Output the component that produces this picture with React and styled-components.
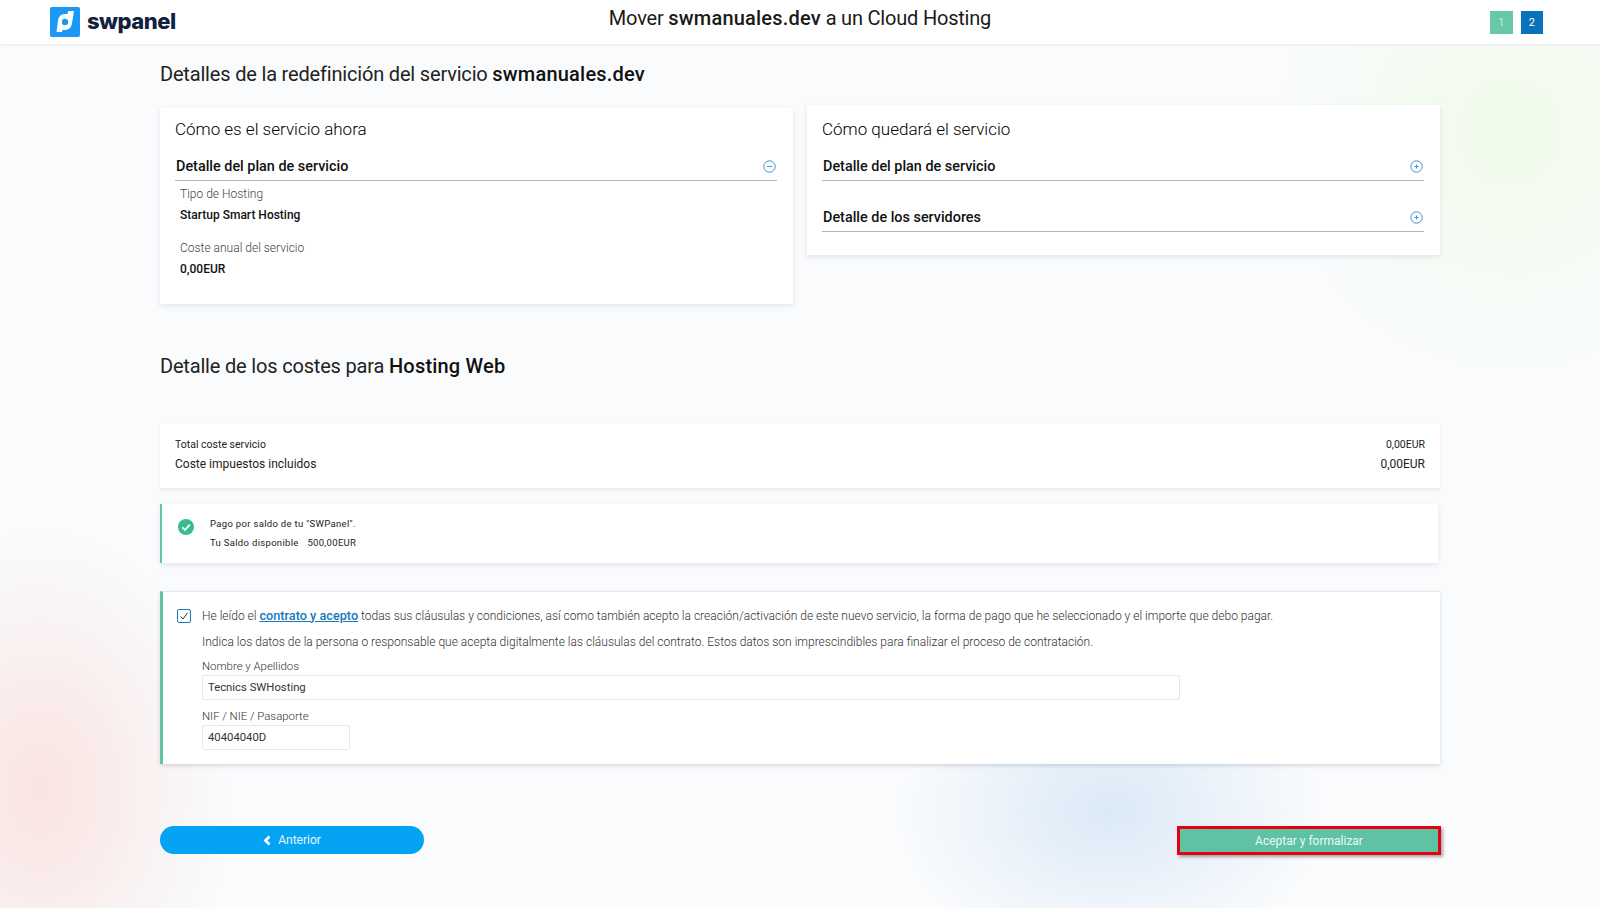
import React from "react";
import styled, { createGlobalStyle } from "styled-components";

const GlobalStyle = createGlobalStyle`
  html, body {
    margin: 0;
    padding: 0;
    height: 100%;
  }
  body {
    font-family: Roboto, "Liberation Sans", sans-serif;
    color: #1a1a1a;
    background-color: #f9fbfd;
  }
  * {
    box-sizing: border-box;
  }
`;

const Page = styled.div`
  width: 1600px;
  height: 908px;
  overflow: hidden;
  background:
    radial-gradient(ellipse 190px 260px at 40px 790px, rgba(250, 222, 218, 0.8), rgba(250, 222, 218, 0) 100%),
    radial-gradient(ellipse 210px 150px at 1110px 810px, rgba(214, 230, 246, 0.85), rgba(214, 230, 246, 0) 100%),
    radial-gradient(ellipse 230px 240px at 1510px 130px, rgba(240, 251, 233, 1), rgba(240, 251, 233, 0) 100%),
    #f9fbfd;
`;

const Header = styled.header`
  height: 45px;
  background: #fff;
  border-bottom: 1px solid #eef0f2;
  box-shadow: 0 1px 2px rgba(0, 0, 0, 0.03);
  display: grid;
  grid-template-columns: 1fr auto 1fr;
  align-items: center;
  padding: 0 50px;
`;

const Brand = styled.div`
  display: flex;
  align-items: center;
  gap: 7px;
`;

const BrandName = styled.span`
  font-family: Inter, sans-serif;
  font-weight: 800;
  font-size: 22px;
  letter-spacing: -0.5px;
  color: #14213d;
  position: relative;
  top: -1px;
`;

const HeaderTitle = styled.div`
  font-size: 20px;
  line-height: 24px;
  letter-spacing: -0.2px;
  position: relative;
  top: -4px;
  b {
    font-weight: 500;
    letter-spacing: 0.2px;
  }
`;

const Steps = styled.div`
  display: flex;
  justify-content: flex-end;
  gap: 8px;
  padding-right: 7px;
`;

const Step = styled.div`
  width: 22.5px;
  height: 23px;
  display: flex;
  align-items: center;
  justify-content: center;
  font-size: 11px;
  color: ${(p) => (p.$active ? "#fff" : "#c5ecdd")};
  background: ${(p) => (p.$active ? "#0a72bd" : "#66c8a7")};
`;

const Main = styled.main`
  width: 1280px;
  margin: 0 auto;
`;

const SectionTitle = styled.h2`
  margin: 0;
  font-size: 20px;
  line-height: 24px;
  font-weight: 400;
  letter-spacing: -0.18px;
  color: #222;
  padding-top: ${(p) => p.$top}px;
  b {
    font-weight: 500;
    letter-spacing: 0.2px;
    color: #111;
  }
`;

const Columns = styled.div`
  display: grid;
  grid-template-columns: 633px 633px;
  justify-content: space-between;
  align-items: start;
  margin-top: 19px;
`;

const Card = styled.section`
  background: #fff;
  box-shadow: 0 2px 5px rgba(40, 50, 70, 0.1);
  padding: ${(p) => 14 - (p.$offset || 0)}px 16px 0 15px;
  height: ${(p) => p.$height}px;
  margin-top: ${(p) => p.$offset || 0}px;
`;

const CardTitle = styled.h3`
  margin: 0 0 13px;
  font-size: 17px;
  line-height: 20px;
  font-weight: 300;
  color: #000;
`;

const DetailHead = styled.div`
  display: flex;
  align-items: center;
  justify-content: space-between;
  height: 29px;
  padding: 0 1px;
  border-bottom: 1px solid #b5b5b5;
  font-size: 14.4px;
  font-weight: 500;
  color: #111;
  margin-bottom: ${(p) => p.$gap || 0}px;
`;

const Field = styled.div`
  padding-left: 5px;
  margin-bottom: 19px;
`;

const FieldLabel = styled.div`
  font-size: 12px;
  line-height: 14px;
  font-weight: 300;
  color: #444;
  margin-top: 6px;
`;

const FieldValue = styled.div`
  font-size: 12px;
  line-height: 14px;
  font-weight: 500;
  color: #111;
  margin-top: 7px;
`;

const CostCard = styled.section`
  margin-top: 46px;
  height: 64px;
  background: #fff;
  box-shadow: 0 2px 3px rgba(40, 50, 70, 0.08);
  padding: 14px 15px 0;
`;

const CostRow = styled.div`
  display: flex;
  justify-content: space-between;
  font-size: ${(p) => (p.$large ? 12 : 10.5)}px;
  line-height: 14px;
  margin-bottom: 5px;
  color: #222;
`;

const PaymentCard = styled.section`
  margin-top: 16px;
  width: 1278px;
  height: 59px;
  background: #fff;
  border-left: 2px solid #5fc5a3;
  box-shadow: 0 2px 5px rgba(40, 50, 70, 0.1);
  display: flex;
  align-items: flex-start;
  padding: 15px 0 0 16px;
  gap: 16px;
`;

const PaymentText = styled.div`
  font-size: 9.5px;
  line-height: 19px;
  color: #222;
  letter-spacing: 0.32px;
  margin-top: -5px;
  span {
    margin-left: 6px;
  }
`;

const ContractCard = styled.section`
  margin-top: 28px;
  height: 173px;
  background: #fff;
  border-left: 3px solid #5fc5a3;
  border-top: 1px solid #e6e8ea;
  box-shadow: 0 2px 4px rgba(40, 50, 70, 0.16);
  padding: 15px 0 0 14px;
`;

const AcceptRow = styled.div`
  display: flex;
  align-items: center;
  gap: 11px;
  height: 17px;
`;

const Checkbox = styled.span`
  width: 14px;
  height: 14px;
  border: 1px solid #1a78b8;
  border-radius: 2px;
  display: flex;
  align-items: center;
  justify-content: center;
`;

const Legal = styled.p`
  margin: ${(p) => p.$top || 0}px 0 0;
  font-size: 12.02px;
  line-height: 16px;
  font-weight: 300;
  color: #333;
  a {
    color: #1577b8;
    font-size: 12.7px;
    font-weight: 500;
    text-decoration: underline;
  }
`;

const FormArea = styled.div`
  padding-left: 25px;
`;

const InputLabel = styled.label`
  display: block;
  font-size: 11.4px;
  line-height: 13px;
  font-weight: 300;
  color: #333;
  margin-top: ${(p) => p.$top}px;
  margin-bottom: 2px;
`;

const Input = styled.div`
  width: ${(p) => p.$width}px;
  height: 25px;
  border: 1px solid #e4e7ea;
  border-radius: 2px;
  background: #fff;
  font-size: 11.3px;
  line-height: 23px;
  color: #333;
  padding-left: 5px;
`;

const Actions = styled.div`
  display: flex;
  justify-content: space-between;
  margin-top: 62px;
`;

const BackButton = styled.button`
  width: 264px;
  height: 28px;
  border: 0;
  border-radius: 14px;
  background: #05a3f4;
  color: #e8f7ff;
  font: 400 12px Roboto, sans-serif;
  display: flex;
  align-items: center;
  justify-content: center;
  gap: 6px;
  padding: 0;
`;

const SubmitButton = styled.button`
  width: 264px;
  height: 29px;
  margin-right: -1px;
  border: 3px solid #e60012;
  background: #5fc2a4;
  color: #e8fbf4;
  font: 400 12px Roboto, sans-serif;
  box-shadow: 2px 2px 3px rgba(60, 60, 60, 0.45);
  padding: 0;
`;

const Logo = () => (
  <svg width="30" height="30" viewBox="0 0 30 30">
    <rect width="30" height="30" rx="2" fill="#1a98f5" />
    <path
      d="M6.5 25 L8 13.5 C8.6 9 11.5 7 15.5 7 L17.5 7 L18.3 4 L24 4 L22 16 C21.3 21 18.3 23 14.5 23 L12.5 23 L12 25 Z"
      fill="#fff"
    />
    <circle cx="15" cy="15" r="3.2" fill="#1a98f5" />
  </svg>
);

const RoundIcon = ({ plus }) => (
  <svg width="13" height="13" viewBox="0 0 13 13" fill="none" stroke="#3d95cf">
    <circle cx="6.5" cy="6.5" r="5.7" strokeWidth="1" />
    <path d={plus ? "M4.5 6.5h4" : "M4 6.5h5"} strokeWidth="1" />
    {plus && <path d="M6.5 4.5v4" strokeWidth="1" />}
  </svg>
);

const CheckIcon = () => (
  <svg width="16" height="16" viewBox="0 0 16 16">
    <circle cx="8" cy="8" r="8" fill="#36bd8e" />
    <path d="M4.2 8.3 L7 11 L11.8 5.6" fill="none" stroke="#fff" strokeWidth="1.8" />
  </svg>
);

const Detail = ({ title, open, gap }) => (
  <DetailHead $gap={gap}>
    {title}
    <RoundIcon plus={!open} />
  </DetailHead>
);

export default function App() {
  return (
    <>
      <GlobalStyle />
      <Page>
        <Header>
          <Brand>
            <Logo />
            <BrandName>swpanel</BrandName>
          </Brand>
          <HeaderTitle>
            Mover <b>swmanuales.dev</b> a un Cloud Hosting
          </HeaderTitle>
          <Steps>
            <Step>1</Step>
            <Step $active>2</Step>
          </Steps>
        </Header>
        <Main>
          <SectionTitle $top={17}>
            Detalles de la redefinición del servicio <b>swmanuales.dev</b>
          </SectionTitle>
          <Columns>
            <Card $height={196} $offset={3}>
              <CardTitle>Cómo es el servicio ahora</CardTitle>
              <Detail title="Detalle del plan de servicio" open />
              <Field>
                <FieldLabel>Tipo de Hosting</FieldLabel>
                <FieldValue>Startup Smart Hosting</FieldValue>
              </Field>
              <Field>
                <FieldLabel>Coste anual del servicio</FieldLabel>
                <FieldValue>0,00EUR</FieldValue>
              </Field>
            </Card>
            <Card $height={150}>
              <CardTitle>Cómo quedará el servicio</CardTitle>
              <Detail title="Detalle del plan de servicio" gap={22} />
              <Detail title="Detalle de los servidores" />
            </Card>
          </Columns>
          <SectionTitle $top={50}>
            Detalle de los costes para <b>Hosting Web</b>
          </SectionTitle>
          <CostCard>
            <CostRow>
              <span>Total coste servicio</span>
              <span>0,00EUR</span>
            </CostRow>
            <CostRow $large>
              <span>Coste impuestos incluidos</span>
              <span>0,00EUR</span>
            </CostRow>
          </CostCard>
          <PaymentCard>
            <CheckIcon />
            <PaymentText>
              Pago por saldo de tu "SWPanel".
              <br />
              Tu Saldo disponible <span>500,00EUR</span>
            </PaymentText>
          </PaymentCard>
          <ContractCard>
            <AcceptRow>
              <Checkbox>
                <svg width="10" height="10" viewBox="0 0 10 10">
                  <path d="M1.5 5.5 L4 8 L8.5 2" fill="none" stroke="#333" strokeWidth="1" />
                </svg>
              </Checkbox>
              <Legal>
                He leído el <a href="#contrato">contrato y acepto</a> todas sus cláusulas y condiciones, así como también acepto la creación/activación de este nuevo servicio, la forma de pago que he seleccionado y el importe que debo pagar.
              </Legal>
            </AcceptRow>
            <FormArea>
              <Legal $top={10}>
                Indica los datos de la persona o responsable que acepta digitalmente las cláusulas del contrato. Estos datos son imprescindibles para finalizar el proceso de contratación.
              </Legal>
              <InputLabel $top={10}>Nombre y Apellidos</InputLabel>
              <Input $width={978}>Tecnics SWHosting</Input>
              <InputLabel $top={10}>NIF / NIE / Pasaporte</InputLabel>
              <Input $width={148}>40404040D</Input>
            </FormArea>
          </ContractCard>
          <Actions>
            <BackButton>
              <svg width="9" height="11" viewBox="0 0 9 11">
                <path d="M6.5 1.5 L2.5 5.5 L6.5 9.5" fill="none" stroke="#fff" strokeWidth="2.8" />
              </svg>
              Anterior
            </BackButton>
            <SubmitButton>Aceptar y formalizar</SubmitButton>
          </Actions>
        </Main>
      </Page>
    </>
  );
}
